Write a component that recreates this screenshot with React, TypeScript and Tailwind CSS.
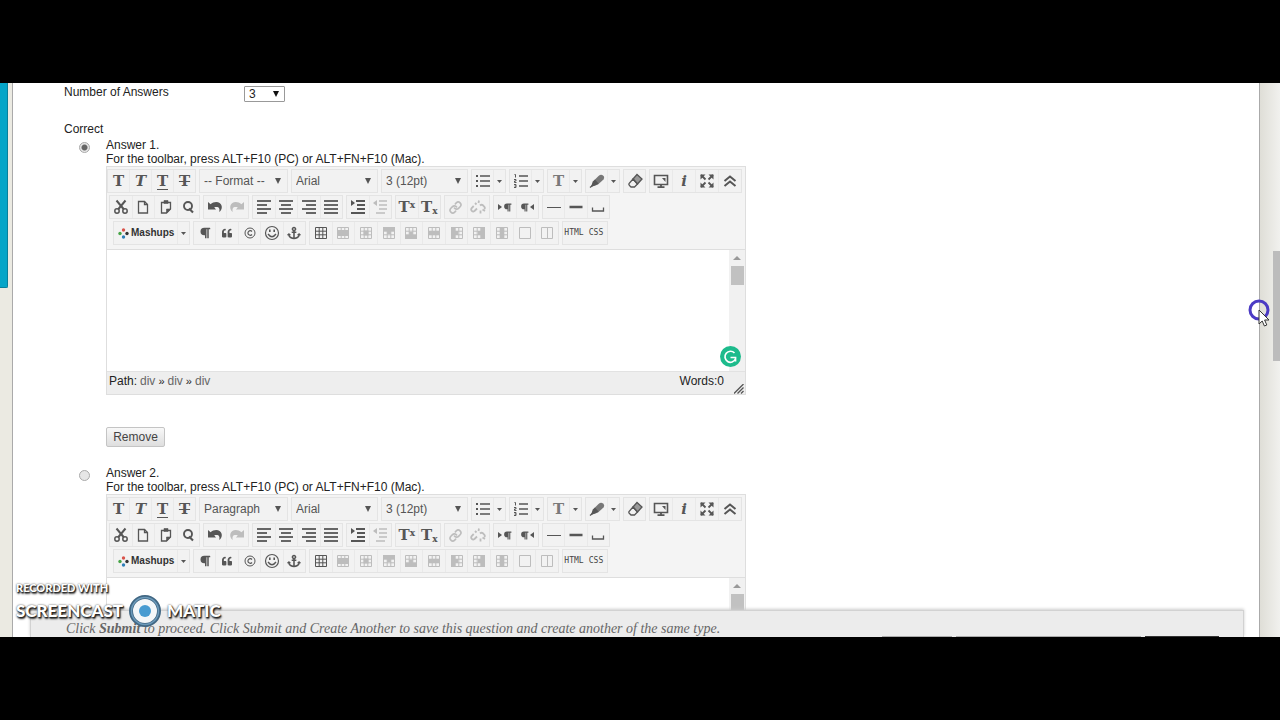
import type { ReactNode } from "react";
import { FaAnchor, FaParagraph, FaQuoteLeft } from "react-icons/fa";
import { Link } from "lucide-react";

interface ToolProps {
  label: string;
  off?: boolean;
  children: ReactNode;
}

function Tool({ label, off, children }: ToolProps) {
  return (
    <button
      type="button"
      aria-label={label}
      disabled={off}
      className={`flex min-w-0 flex-1 items-center justify-center border-l border-[#e9e9e9] first:border-l-0 ${off ? "text-[#bdbdbd]" : "text-[#565656]"}`}
    >
      {children}
    </button>
  );
}

function Group({ width, children }: { width: string; children: ReactNode }) {
  return <div className={`flex h-6 shrink-0 border border-[#e4e4e4] bg-[#f2f2f2] ${width}`}>{children}</div>;
}

function Svg({ children }: { children: ReactNode }) {
  return (
    <svg width="16" height="16" viewBox="0 0 16 16" fill="none" stroke="currentColor" strokeWidth="1.3" className="shrink-0">
      {children}
    </svg>
  );
}

function MoreArrow({ label }: { label: string }) {
  return (
    <button type="button" aria-label={label} className="flex w-3 shrink-0 items-center justify-center border-l border-[#e9e9e9] text-[#565656]">
      <svg width="5" height="3" viewBox="0 0 5 3" fill="currentColor">
        <path d="M0 0h5L2.5 3z" />
      </svg>
    </button>
  );
}

function ToolSelect({ label, value, width }: { label: string; value: string; width: string }) {
  return (
    <div className={`relative h-6 shrink-0 border border-[#e4e4e4] bg-[#f2f2f2] ${width}`}>
      <select aria-label={label} className="h-full w-full appearance-none bg-transparent pl-1 text-[12px] text-[#555]">
        <option>{value}</option>
      </select>
      <svg width="6" height="6" viewBox="0 0 6 6" fill="#555" className="pointer-events-none absolute top-2 right-1.5">
        <path d="M0 0h6L3 6z" />
      </svg>
    </div>
  );
}

const glyph = "font-['DejaVu_Serif',serif] text-[15px] leading-4 font-bold";

function Lines({ rows }: { rows: [number, number][] }) {
  return (
    <Svg>
      {rows.map(([x1, x2], i) => (
        <path key={i} d={`M${x1} ${2 + i * 4}H${x2}`} strokeWidth="1.8" />
      ))}
    </Svg>
  );
}

// small 3x3 grid with the affected cells filled in
function GridIcon({ fill }: { fill: string }) {
  return (
    <Svg>
      <path d="M2.5 2.5h11v11h-11zM2.5 6.2h11M2.5 9.8h11M6.2 2.5v11M9.8 2.5v11" strokeWidth="1" />
      <path d={fill} fill="currentColor" stroke="none" />
    </Svg>
  );
}

const tableTools = [
  { label: "Row properties", fill: "M2 5h12v6H2z" },
  { label: "Cell properties", fill: "M5.5 5.5h5v5h-5z" },
  { label: "Insert row before", fill: "M2 2h12v4H9.8v3H6.2V6H2z" },
  { label: "Insert row after", fill: "M2 14h12v-4H9.8V7H6.2v3H2z" },
  { label: "Delete row", fill: "M2 6h12v4H2z" },
  { label: "Insert column before", fill: "M2 2h4v4h3v4H6v4H2z" },
  { label: "Insert column after", fill: "M14 2h-4v4H7v4h3v4h4z" },
  { label: "Delete column", fill: "M6 2h4v12H6z" },
];

function Toolbar({ format }: { format: string }) {
  return (
    <div className="flex flex-col gap-0.5 border-b border-[#dedede] bg-[#f4f4f4] pt-0.5 pb-1">
      <div className="flex gap-[3px]">
        <Group width="w-[89px]">
          <Tool label="Bold"><span className={glyph}>T</span></Tool>
          <Tool label="Italic"><span className={`${glyph} italic`}>T</span></Tool>
          <Tool label="Underline"><span className={`${glyph} border-b border-[#565656]`}>T</span></Tool>
          <Tool label="Strikethrough"><span className={`${glyph} line-through decoration-1`}>T</span></Tool>
        </Group>
        <ToolSelect label="Format" value={format} width="w-[89px]" />
        <ToolSelect label="Font" value="Arial" width="w-[87px]" />
        <ToolSelect label="Size" value="3 (12pt)" width="w-[87px]" />
        <Group width="w-[35px]">
          <Tool label="Bulleted list">
            <Svg>
              <path d="M5 3h10M5 8h10M5 13h10" strokeWidth="1.6" />
              <path d="M1 3h2M1 8h2M1 13h2" strokeWidth="2" />
            </Svg>
          </Tool>
          <MoreArrow label="List styles" />
        </Group>
        <Group width="w-[35px]">
          <Tool label="Numbered list">
            <Svg>
              <path d="M6 3h9M6 8h9M6 13h9" strokeWidth="1.6" />
              <path d="M1.5 1.5h1v3M1 6.5h2v1.5h-1.5v1.5h2M1 11.5h2v3h-2M1.5 13h1.5" strokeWidth="1" />
            </Svg>
          </Tool>
          <MoreArrow label="Number styles" />
        </Group>
        <Group width="w-[35px]">
          <Tool label="Text color"><span className={`${glyph} text-[#7a7a7a]`}>T</span></Tool>
          <MoreArrow label="Text colors" />
        </Group>
        <Group width="w-[35px]">
          <Tool label="Highlight">
            <Svg>
              <path d="M2 13.5l2-5 5.5-5.500q2.500-2 4.500-.500t.500 4l-5.500 5-4 1.500z" fill="#777" stroke="none" />
              <path d="M2 14l2-5.500 2-2 3.500 4-2.500 1.500z" fill="currentColor" stroke="none" />
              <path d="M1 14.500l3-2.500" />
            </Svg>
          </Tool>
          <MoreArrow label="Highlight colors" />
        </Group>
        <Group width="w-[23px]">
          <Tool label="Remove formatting">
            <Svg>
              <path d="M6 6l4-4.500 5 4.500-4.500 5z" fill="#999" />
              <path d="M6 6l-4 4.500q-.500 1 .500 2l1.500 1.500h3.500l3-3z" />
            </Svg>
          </Tool>
        </Group>
        <Group width="w-[93px]">
          <Tool label="Preview">
            <Svg>
              <path d="M1.500 2.500h13v9h-13z" strokeWidth="1.600" />
              <path d="M8 11v3M4.500 14.200h7" strokeWidth="1.800" />
              <path d="M9 5h3.500v4z" fill="currentColor" stroke="none" />
            </Svg>
          </Tool>
          <Tool label="Help"><span className={`${glyph} italic`}>i</span></Tool>
          <Tool label="Full screen">
            <Svg>
              <path d="M2 2l4.500 4.500M14 2L9.500 6.500M2 14l4.500-4.500M14 14L9.500 9.500" strokeWidth="1.800" />
              <path d="M1.500 1.500h5l-5 5zM14.500 1.500v5l-5-5zM1.500 14.500v-5l5 5zM14.500 14.500h-5l5-5z" fill="currentColor" stroke="none" />
            </Svg>
          </Tool>
          <Tool label="Show less">
            <Svg>
              <path d="M2.500 8L8 3.500 13.500 8M2.500 13L8 8.500l5.500 4.500" strokeWidth="2" />
            </Svg>
          </Tool>
        </Group>
      </div>

      <div className="flex gap-[3px] pl-0.5">
        <Group width="w-[91px]">
          <Tool label="Cut">
            <Svg>
              <path d="M3.500 1.500l7.500 9M12.500 1.500L5 10.500" strokeWidth="2" />
              <circle cx="4" cy="12" r="2.200" strokeWidth="1.500" />
              <circle cx="12" cy="12" r="2.200" strokeWidth="1.500" />
            </Svg>
          </Tool>
          <Tool label="Copy">
            <Svg>
              <path d="M3.500 2.500h6l3 3v8.500h-9z" />
              <path d="M9.500 2.500v3h3" />
            </Svg>
          </Tool>
          <Tool label="Paste">
            <Svg>
              <path d="M6 3.500H3.500V14h5l4-4V3.500H10" />
              <path d="M6 1.500h4v3H6zM8.500 10h4L8.500 14z" fill="currentColor" strokeWidth=".6" />
            </Svg>
          </Tool>
          <Tool label="Find">
            <Svg>
              <circle cx="8" cy="7" r="4" strokeWidth="1.900" />
              <path d="M9 9.500l4 4" strokeWidth="2.200" />
            </Svg>
          </Tool>
        </Group>
        <Group width="w-[46px]">
          <Tool label="Undo">
            <Svg>
              <path d="M1 3l2.600 2.200C7 2 13.500 2 14.700 7c.5 2.700-.700 4.700-2.500 6 .800-3.500 0-5.700-5-4.700L9 10.500H1z" fill="currentColor" stroke="none" />
            </Svg>
          </Tool>
          <Tool label="Redo" off>
            <Svg>
              <path d="M15 3l-2.600 2.200C9 2 2.500 2 1.300 7c-.5 2.700.700 4.700 2.500 6-.800-3.500 0-5.700 5-4.700L7 10.500h8z" fill="currentColor" stroke="none" />
            </Svg>
          </Tool>
        </Group>
        <Group width="w-[91px]">
          <Tool label="Align left"><Lines rows={[[1, 15], [1, 11], [1, 15], [1, 11]]} /></Tool>
          <Tool label="Align center"><Lines rows={[[1, 15], [3, 13], [1, 15], [3, 13]]} /></Tool>
          <Tool label="Align right"><Lines rows={[[1, 15], [5, 15], [1, 15], [5, 15]]} /></Tool>
          <Tool label="Justify"><Lines rows={[[1, 15], [1, 15], [1, 15], [1, 15]]} /></Tool>
        </Group>
        <Group width="w-[46px]">
          <Tool label="Indent">
            <Svg>
              <path d="M6 2h9M7 6h8M7 10h8M1 14h14" strokeWidth="1.800" />
              <path d="M1 1l4 3-4 3z" fill="currentColor" stroke="none" />
            </Svg>
          </Tool>
          <Tool label="Outdent" off>
            <Svg>
              <path d="M7 2h8M7 6h8M7 10h8M4 14h9" strokeWidth="1.500" />
              <path d="M5 1L1 4l4 3z" fill="currentColor" stroke="none" />
            </Svg>
          </Tool>
        </Group>
        <Group width="w-[46px]">
          <Tool label="Superscript"><span className={glyph}>T<sup className="text-[9px]">x</sup></span></Tool>
          <Tool label="Subscript"><span className={glyph}>T<sub className="text-[9px]">x</sub></span></Tool>
        </Group>
        <Group width="w-[46px]">
          <Tool label="Link" off><Link size={13} strokeWidth={3} /></Tool>
          <Tool label="Unlink" off>
            <Svg>
              <path d="M7 9.500L4.500 12q-1.500 1-2.700-.200t-.100-2.800l2-2M10 6.500q1.500-1.500 3-.200l1.200 1.200q1.200 1.500 0 2.500M5 4l1.500 1.500M9 1.500L8.500 4M10.500 11.500v3M12.500 10.500l2.500 1.500" strokeWidth="1.800" />
            </Svg>
          </Tool>
        </Group>
        <Group width="w-[46px]">
          <Tool label="Left to right">
            <svg width="5" height="6" viewBox="0 0 5 6" fill="currentColor"><path d="M0 0l4 3-4 3z" /></svg>
            <FaParagraph size={9} />
          </Tool>
          <Tool label="Right to left">
            <FaParagraph size={9} />
            <svg width="5" height="6" viewBox="0 0 5 6" fill="currentColor"><path d="M5 0L1 3l4 3z" /></svg>
          </Tool>
        </Group>
        <Group width="w-[68px]">
          <Tool label="Thin line"><Svg><path d="M1 8.500h14" strokeWidth="1" /></Svg></Tool>
          <Tool label="Thick line"><Svg><path d="M1.500 8h13" strokeWidth="2.500" /></Svg></Tool>
          <Tool label="Non-breaking space"><Svg><path d="M2.500 8.500V12h11V8.500" /></Svg></Tool>
        </Group>
      </div>

      <div className="flex gap-[3px] pl-1.5">
        <Group width="w-[77px]">
          <button type="button" className="flex flex-1 items-center gap-0.5 pl-1 text-[10px] font-bold text-[#333]">
            <svg width="11" height="11" viewBox="0 0 11 11" className="shrink-0">
              <circle cx="5.500" cy="2" r="1.700" fill="#d9534a" />
              <circle cx="2" cy="5.500" r="1.700" fill="#47a447" />
              <circle cx="9" cy="5.500" r="1.700" fill="#333" />
              <circle cx="5.500" cy="9" r="1.700" fill="#2d7fb8" />
            </svg>
            Mashups
          </button>
          <MoreArrow label="More mashups" />
        </Group>
        <Group width="w-[113px]">
          <Tool label="Show blocks"><FaParagraph size={12} /></Tool>
          <Tool label="Block quote"><FaQuoteLeft size={10} /></Tool>
          <Tool label="Symbol">
            <Svg>
              <circle cx="8" cy="8" r="5" strokeWidth="1" />
              <path d="M10 6.500a2.300 2.300 0 1 0 0 3" strokeWidth="1.200" />
            </Svg>
          </Tool>
          <Tool label="Emoticon">
            <Svg>
              <circle cx="8" cy="8" r="6.500" strokeWidth="1.200" />
              <path d="M4 9q4 5.500 8 0" />
              <path d="M5.800 4.500v2.500M10.200 4.500v2.500" strokeWidth="1.600" />
            </Svg>
          </Tool>
          <Tool label="Anchor"><FaAnchor size={14} /></Tool>
        </Group>
        <Group width="w-[250px]">
          <Tool label="Table"><GridIcon fill="" /></Tool>
          {tableTools.map((t) => (
            <Tool key={t.label} label={t.label} off><GridIcon fill={t.fill} /></Tool>
          ))}
          <Tool label="Merge cells" off><Svg><path d="M2.500 2.500h11v11h-11z" strokeWidth="1" /></Svg></Tool>
          <Tool label="Split cells" off><Svg><path d="M2.500 2.500h11v11h-11zM8.500 2.500v11" strokeWidth="1" /></Svg></Tool>
        </Group>
        <Group width="w-[46px]">
          <button type="button" className="flex-1 font-['DejaVu_Sans_Mono',monospace] text-[8px] text-[#444]">HTML</button>
          <button type="button" className="flex-1 font-['DejaVu_Sans_Mono',monospace] text-[8px] text-[#444]">CSS</button>
        </Group>
      </div>
    </div>
  );
}

function StatusBar() {
  return (
    <div className="flex h-[23px] items-start border-t border-[#e2e2e2] bg-[#eee] pt-0.5 pr-px pl-0.5">
      <div className="flex gap-[3px]">
        Path: <span className="text-[#666]">div</span>
        <span className="text-[11px]">»</span> <span className="text-[#666]">div</span>
        <span className="text-[11px]">»</span> <span className="text-[#666]">div</span>
      </div>
      <span className="ml-auto">Words:0</span>
      <svg width="10" height="10" viewBox="0 0 10 10" stroke="#555" className="ml-2.5 self-end">
        <path d="M0 9.500L9.500 0M3.500 9.500l6-6M7 9.500L9.500 7" strokeWidth="1.300" />
      </svg>
    </div>
  );
}

interface AnswerProps {
  number: number;
  format: string;
  checked?: boolean;
  expanded?: boolean;
}

function Answer({ number, format, checked, expanded }: AnswerProps) {
  return (
    <div className="mb-[19px] flex">
      <input
        type="radio"
        name="correct"
        id={`answer-${number}`}
        defaultChecked={checked}
        className="mt-1 mr-4 ml-[15px] h-[11px] w-[11px] shrink-0 appearance-none rounded-full border border-[#aaa] bg-[#e6e6e6] checked:bg-[radial-gradient(circle,#666_0_2.5px,#e6e6e6_3.5px)]"
      />
      <div className="min-w-0">
        <label htmlFor={`answer-${number}`} className="block">Answer {number}.</label>
        <p>For the toolbar, press ALT+F10 (PC) or ALT+FN+F10 (Mac).</p>
        <div className="w-[640px] max-w-full border border-[#dedede]">
          <Toolbar format={format} />
          <div className="relative flex h-[121px]">
            <textarea aria-label={`Answer ${number}`} className="flex-1 resize-none bg-white outline-none" />
            <div className="flex w-4 flex-col items-center bg-[#f1f1f1] pt-1.5">
              <svg width="8" height="4" viewBox="0 0 8 4" fill="#999"><path d="M0 4h8L4 0z" /></svg>
              <div className="mt-1.5 h-[19px] w-[13px] bg-[#c1c1c1]" />
            </div>
            <svg width="21" height="21" viewBox="0 0 21 21" className="absolute right-1 bottom-1">
              <circle cx="10.500" cy="10.500" r="10.500" fill="#1dbb8c" />
              <path d="M14.500 7A5.500 5.500 0 1 0 15.500 13M10.500 11.500h5v4" fill="none" stroke="#fff" strokeWidth="1.700" />
            </svg>
          </div>
          {expanded && <StatusBar />}
        </div>
        {expanded && (
          <button
            type="button"
            className="mt-8 block h-5 w-[59px] rounded-[2px] border border-[#c4c4c4] bg-linear-to-b from-[#f8f8f8] to-[#dedede] text-[12px] text-[#444]"
          >
            Remove
          </button>
        )}
      </div>
    </div>
  );
}

function Watermark() {
  return (
    <div className="pointer-events-none absolute bottom-[9px] left-4 font-['Lato',sans-serif] font-black text-white [text-shadow:1px_1px_1px_#222,0_0_2px_#444,1px_2px_2px_#333]">
      <div className="text-[11px] leading-3">RECORDED WITH</div>
      <div className="flex items-center gap-[5px] text-[17px] leading-[34px]">
        SCREENCAST
        <svg width="34" height="34" viewBox="0 0 34 34">
          <circle cx="17" cy="17" r="14" fill="#f4f7f9" stroke="#416783" strokeWidth="4" />
          <circle cx="17" cy="17" r="13.500" fill="none" stroke="#6c9aba" strokeWidth="1.500" />
          <circle cx="17" cy="17" r="6" fill="#479bd1" />
        </svg>
        MATIC
      </div>
    </div>
  );
}

export default function App() {
  return (
    <div className="h-screen overflow-hidden bg-black py-[83px] font-['Liberation_Sans',Arial,sans-serif] text-[12px] leading-[14px] text-[#222]">
      <div className="relative flex h-full overflow-hidden bg-[#ebeae2]">
        <div className="w-3 shrink-0">
          <div className="h-[205px] w-2 rounded-br-[2px] border-r border-b border-[#087f9b] bg-[#05a5c8]" />
        </div>

        <main className="relative min-w-0 flex-1 overflow-hidden border-x border-[#aaa] bg-white pl-[51px]">
          <div className="flex h-[19px] items-start pt-0.5">
            <label htmlFor="count" className="w-[180px]">Number of Answers</label>
            <div className="relative mt-px">
              <select id="count" className="block h-4 w-[41px] appearance-none rounded-[1px] border border-[#999] bg-white pl-1 text-[12px] leading-[14px]">
                <option>3</option>
              </select>
              <svg width="6" height="6" viewBox="0 0 6 6" fill="#111" className="pointer-events-none absolute top-[5px] right-1.5">
                <path d="M0 0h6L3 6z" />
              </svg>
            </div>
          </div>
          <h2 className="mt-5 mb-0.5">Correct</h2>
          <Answer number={1} format="-- Format --" checked expanded />
          <Answer number={2} format="Paragraph" />

          <footer className="absolute right-[15px] bottom-0 left-[17px] h-[27px] overflow-hidden border border-b-0 border-[#d2d2d2] bg-[#ececec] pt-[11px] pl-[35px] shadow-[0_-1px_3px_#ccc]">
            <p className="font-['Liberation_Serif',serif] text-[14px] leading-[14px] text-[#666] italic">
              Click <b>Submit</b> to proceed. Click Submit and Create Another to save this question and create another of the same type.
            </p>
            <div className="flex justify-end gap-1 pr-6">
              <span className="h-5 w-[70px] bg-[#aaa]" />
              <span className="h-5 w-[185px] bg-[#aaa]" />
              <span className="h-5 w-[74px] bg-[#333]" />
            </div>
          </footer>
        </main>

        <div className="flex w-5 shrink-0 justify-end bg-linear-to-r from-[#dfded7] to-[#f1f1ee] pt-[168px]">
          <div className="h-[110px] w-[7px] bg-[#bcbcbc]" />
        </div>

        <Watermark />
        <svg width="22" height="28" viewBox="0 0 22 28" className="pointer-events-none absolute top-[216px] right-[10px]">
          <circle cx="11" cy="11" r="9" fill="none" stroke="#4b3bc4" strokeWidth="3" />
          <path d="M11 11v14l3.200-3 2.200 5 2.400-1-2.200-5h4.400z" fill="#fff" stroke="#333" strokeWidth="1" />
        </svg>
      </div>
    </div>
  );
}
